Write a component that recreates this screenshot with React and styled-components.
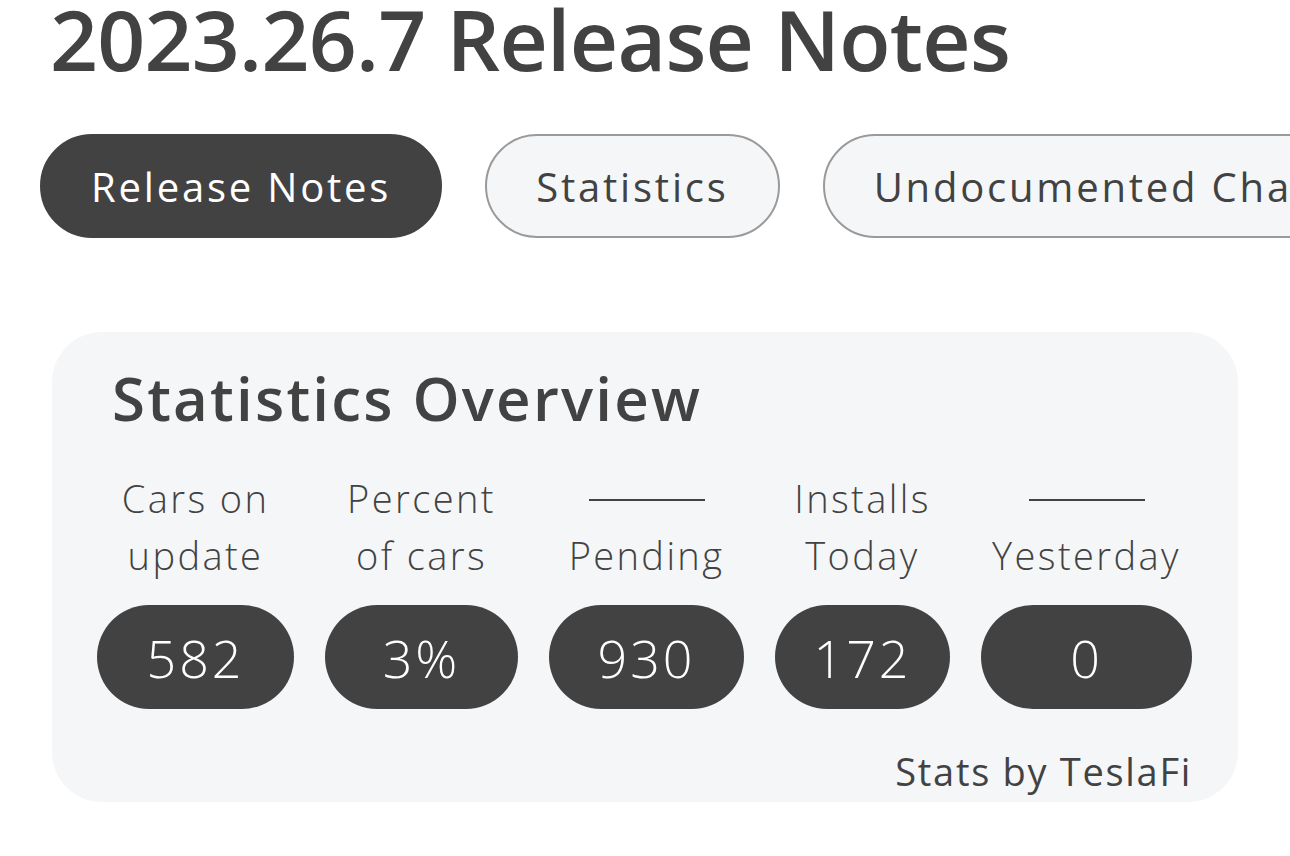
import React from "react";
import styled, { createGlobalStyle } from "styled-components";

const Global = createGlobalStyle`
  html, body { margin: 0; padding: 0; background: #ffffff; }
  body { font-family: "Open Sans", "Noto Sans", sans-serif; color: #424242; overflow: hidden; }
`;

const Page = styled.div`
  width: 1290px;
  height: 856px;
  overflow: hidden;
  display: flex;
  flex-direction: column;
`;

const Title = styled.h1`
  margin: -11px 0 0 50px;
  font-size: 84px;
  line-height: 100px;
  font-weight: 600;
  letter-spacing: -0.75px;
  white-space: nowrap;
  color: #424242;
`;

const Tabs = styled.div`
  display: flex;
  gap: 43px;
  margin: 45px 0 0 40px;
  white-space: nowrap;
`;

const Tab = styled.div`
  flex: none;
  height: 104px;
  box-sizing: border-box;
  padding: 0 49px;
  display: flex;
  align-items: center;
  border-radius: 52px;
  font-size: 40px;
  letter-spacing: 2.8px;
  border: 2px solid ${(p) => (p.$active ? "#424242" : "#9a9a9a")};
  background: ${(p) => (p.$active ? "#424242" : "#f5f6f8")};
  color: ${(p) => (p.$active ? "#ffffff" : "#424242")};
`;

const Card = styled.section`
  margin: 94px 0 0 52px;
  width: 1186px;
  height: 470px;
  box-sizing: border-box;
  border-radius: 50px;
  background: #f5f6f8;
  padding: 26px 46px 0 45px;
  display: flex;
  flex-direction: column;
`;

const CardTitle = styled.h2`
  margin: 0 0 0 15px;
  font-size: 60px;
  line-height: 80px;
  font-weight: 600;
  letter-spacing: 2.2px;
  color: #424242;
`;

const Grid = styled.div`
  display: grid;
  grid-template-columns: 197px 193px 195px 175px 211px;
  column-gap: 31px;
  margin-top: 32px;
`;

const Label = styled.div`
  display: flex;
  flex-direction: column;
  align-items: center;
  font-size: 38px;
  line-height: 57px;
  font-weight: 300;
  letter-spacing: 2.4px;
  white-space: nowrap;
  color: #424242;
`;

const Dash = styled.span`
  display: block;
  width: 116px;
  height: 2px;
  margin: 29px 0 26px;
  background: #424242;
`;

const Value = styled.div`
  margin-top: 21px;
  height: 104px;
  border-radius: 52px;
  background: #424242;
  color: #ffffff;
  display: flex;
  align-items: center;
  justify-content: center;
  font-size: 52px;
  font-weight: 300;
  letter-spacing: 3px;
`;

const Credit = styled.div`
  margin-top: 37px;
  align-self: flex-end;
  font-size: 38px;
  line-height: 50px;
  font-weight: 400;
  letter-spacing: 1.7px;
  color: #424242;
`;

const stats = [
  { top: "Cars on", bottom: "update", value: "582" },
  { top: "Percent", bottom: "of cars", value: "3%" },
  { top: null, bottom: "Pending", value: "930" },
  { top: "Installs", bottom: "Today", value: "172" },
  { top: null, bottom: "Yesterday", value: "0" },
];

export default function App() {
  return (
    <Page>
      <Global />
      <Title>2023.26.7 Release Notes</Title>
      <Tabs>
        <Tab $active>Release Notes</Tab>
        <Tab>Statistics</Tab>
        <Tab>Undocumented Changes</Tab>
      </Tabs>
      <Card>
        <CardTitle>Statistics Overview</CardTitle>
        <Grid>
          {stats.map((s) => (
            <Label key={s.bottom}>
              {s.top ? <span>{s.top}</span> : <Dash />}
              <span>{s.bottom}</span>
            </Label>
          ))}
          {stats.map((s) => (
            <Value key={s.value + s.bottom}>{s.value}</Value>
          ))}
        </Grid>
        <Credit>Stats by TeslaFi</Credit>
      </Card>
    </Page>
  );
}
